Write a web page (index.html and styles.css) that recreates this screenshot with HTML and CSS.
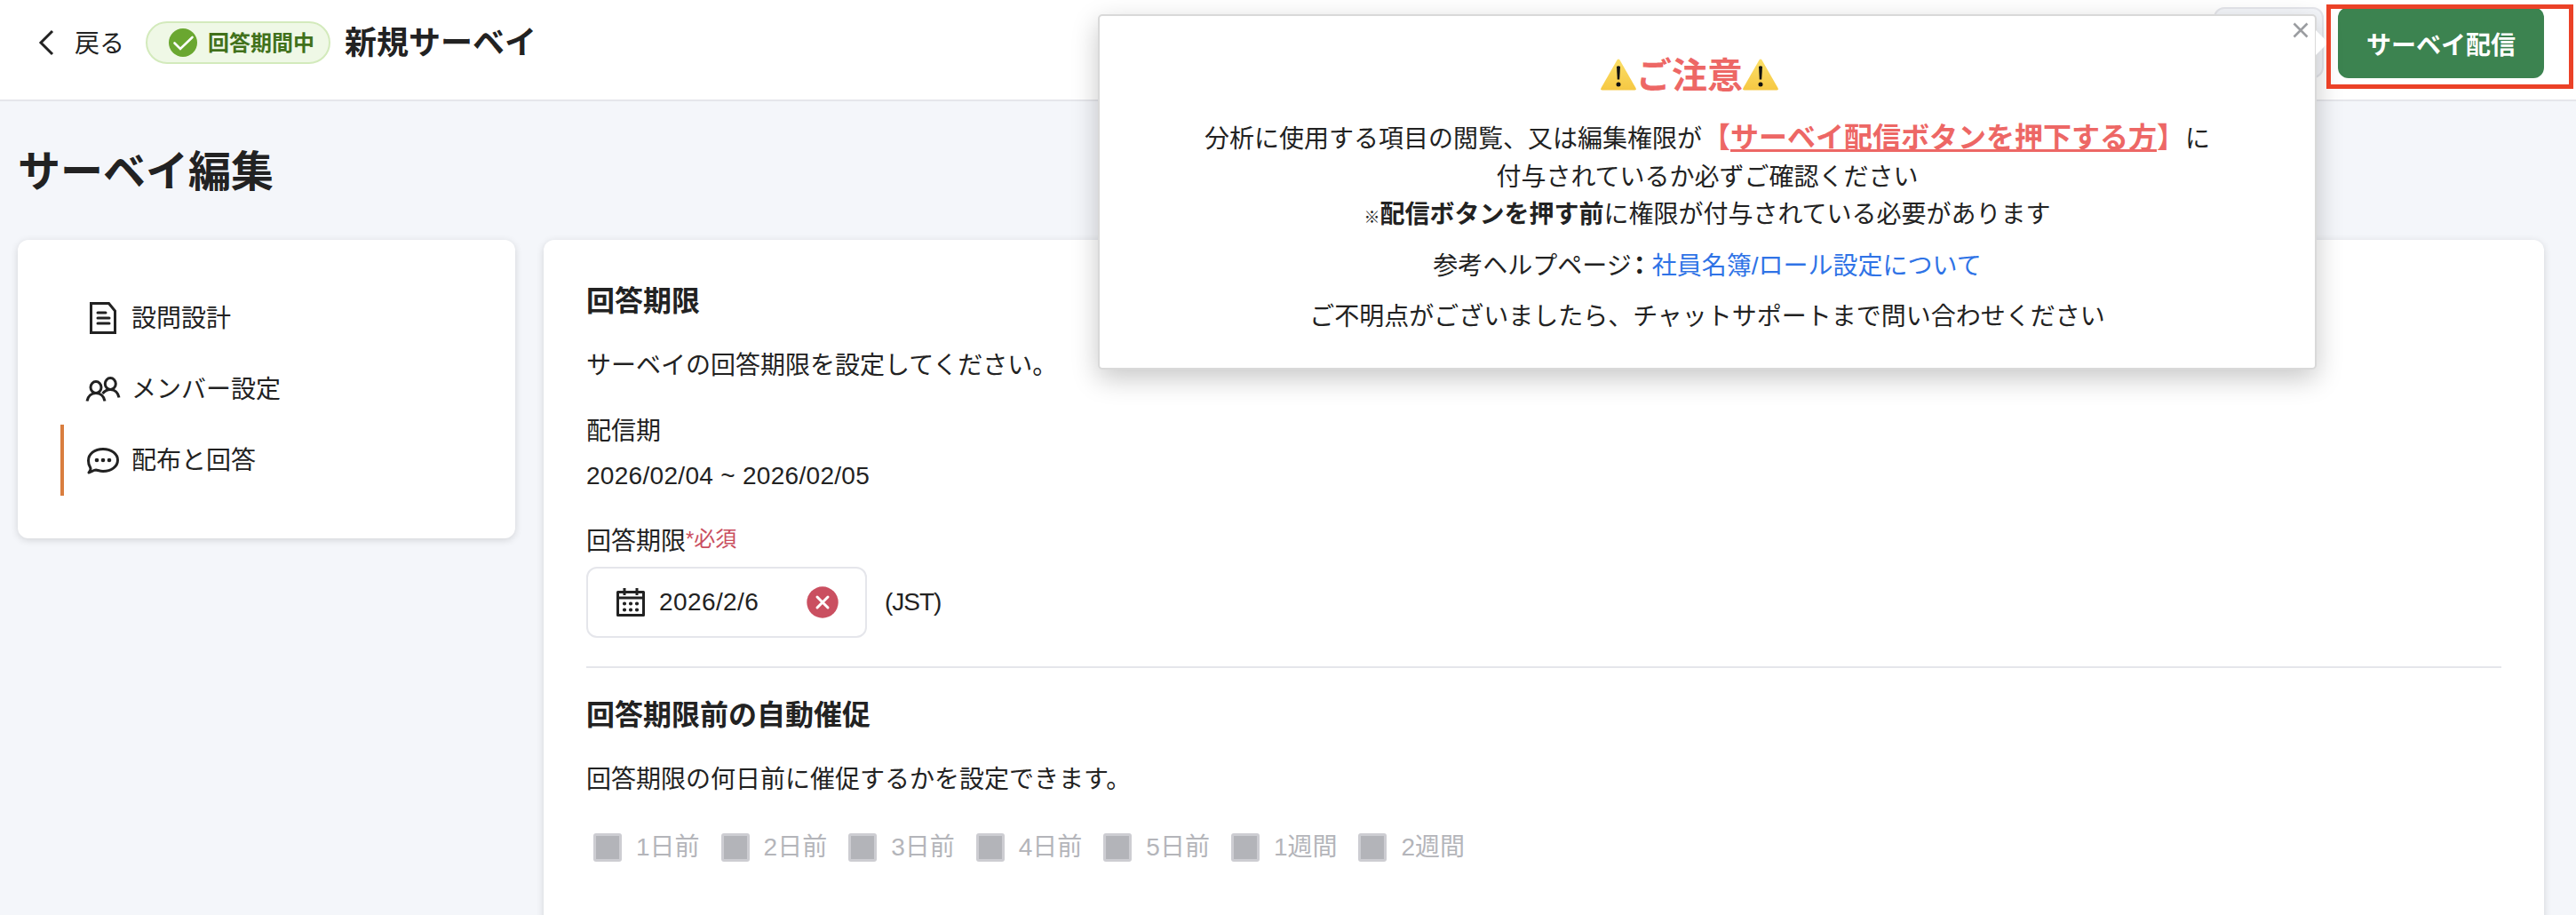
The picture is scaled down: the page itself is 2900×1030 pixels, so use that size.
FILE: index.html
```html
<!DOCTYPE html>
<html lang="ja">
<head>
  <meta charset="UTF-8">
  <meta name="viewport" content="width=device-width, initial-scale=1.0">
  <title>サーベイ編集</title>
  <link rel="stylesheet" href="styles.css">
</head>
<body>
  <!-- Header -->
  <header class="header">
    <a class="back" href="#">
      <svg class="back-icon" width="20" height="32" viewBox="0 0 20 32"><path d="M17 3 4 16l13 13" fill="none" stroke="currentColor" stroke-width="3"/></svg>
      <span>戻る</span>
    </a>
    <div class="badge">
      <svg width="32" height="32" viewBox="0 0 32 32">
        <circle cx="16" cy="16" r="16" fill="#6aa730"/>
        <path d="M6.500 16.500 13 23 26.500 10" fill="none" stroke="#fff" stroke-width="2.600" stroke-linecap="round"/>
      </svg>
      <span>回答期間中</span>
    </div>
    <h1 class="survey-name">新規サーベイ</h1>
    <div class="header-actions">
      <button class="sub-button" type="button" aria-label="メニュー"></button>
      <div class="send-area">
        <button class="send-button" type="button">サーベイ配信</button>
        <div class="highlight"></div>
      </div>
    </div>
  </header>

  <h2 class="page-title">サーベイ編集</h2>

  <div class="layout">
    <!-- Side menu -->
    <nav class="card side-menu">
      <a class="menu-item" href="#">
        <svg class="menu-icon" width="40" height="40" viewBox="0 0 40 40" fill="none" stroke="currentColor" stroke-width="3">
          <path d="M6.500 3.500H26.500L33.500 12V36.500H6.500Z"/>
          <path d="M14 14H23M14 20H27M14 26H27" stroke-linecap="round"/>
        </svg>
        <span>設問設計</span>
      </a>
      <a class="menu-item" href="#">
        <svg class="menu-icon" width="40" height="40" viewBox="0 0 40 40" fill="none" stroke="currentColor" stroke-width="3">
          <ellipse cx="12" cy="18" rx="6" ry="6.500"/>
          <ellipse cx="28.300" cy="14" rx="6" ry="6.500"/>
          <path d="M2 33.500C3 28 7 24.500 12 24.500S21 28 22 33.500M19.500 25C21.500 22.500 24.500 20.500 28.300 20.500 33.500 20.500 37 24.500 38 29.500"/>
        </svg>
        <span>メンバー設定</span>
      </a>
      <a class="menu-item active" href="#">
        <svg class="menu-icon" width="40" height="40" viewBox="0 0 40 40">
          <path d="M5.500 28C3.800 25.700 3.500 22.500 3.500 20.500 3.500 13 10.500 7.500 20 7.500S36.500 13 36.500 20 29.500 32.500 20 32.500C17 32.500 14.500 31.500 12 31 9 31 7 33.500 4 34 5.500 32 7 30.500 5.500 28Z" fill="none" stroke="currentColor" stroke-width="3" stroke-linejoin="round"/>
          <circle cx="13" cy="20" r="2.300" fill="currentColor"/>
          <circle cx="20" cy="20" r="2.300" fill="currentColor"/>
          <circle cx="27" cy="20" r="2.300" fill="currentColor"/>
        </svg>
        <span>配布と回答</span>
      </a>
    </nav>

    <!-- Main content -->
    <main class="card content">
      <section class="deadline">
        <h3>回答期限</h3>
        <p class="description">サーベイの回答期限を設定してください。</p>
        <p class="term-label">配信期</p>
        <p class="term">2026/02/04 ~ 2026/02/05</p>
        <p class="field-label">回答期限<span class="required">*必須</span></p>
        <div class="date-row">
          <div class="date-input">
            <svg width="32" height="34" viewBox="0 0 32 34">
              <path d="M1.500 5.500H30.500V31.500H1.500Z" fill="none" stroke="currentColor" stroke-width="3" stroke-linejoin="round"/>
              <path d="M0 12H32M9 1V9M23 1V9" stroke="currentColor" stroke-width="3"/>
              <path d="M9 18.500h.01M16 18.500h.01M23 18.500h.01M9 25.500h.01M16 25.500h.01M23 25.500h.01" stroke="currentColor" stroke-width="4.200" stroke-linecap="round"/>
            </svg>
            <span class="date">2026/2/6</span>
            <svg class="clear" width="36" height="36" viewBox="0 0 36 36">
              <circle cx="18" cy="18" r="17.700" fill="#ca4f60"/>
              <path d="M12 12 24 24M24 12 12 24" stroke="#fff" stroke-width="3" stroke-linecap="round"/>
            </svg>
          </div>
          <span class="timezone">(JST)</span>
        </div>
      </section>

      <section class="reminder">
        <h3>回答期限前の自動催促</h3>
        <p class="description">回答期限の何日前に催促するかを設定できます。</p>
        <div class="checks">
          <label class="check"><span class="box"></span>1日前</label>
          <label class="check"><span class="box"></span>2日前</label>
          <label class="check"><span class="box"></span>3日前</label>
          <label class="check"><span class="box"></span>4日前</label>
          <label class="check"><span class="box"></span>5日前</label>
          <label class="check"><span class="box"></span>1週間</label>
          <label class="check"><span class="box"></span>2週間</label>
        </div>
      </section>
    </main>
  </div>

  <!-- Notice popup -->
  <div class="popup">
    <svg class="popup-close" width="18" height="18" viewBox="0 0 18 18"><path d="M1.500 1.500 16.500 16.500M16.500 1.500 1.500 16.500" stroke="#9b9da1" stroke-width="2.600"/></svg>
    <h2 class="popup-title">
      <svg class="warning" width="40" height="36" viewBox="0 0 40 36">
        <defs>
          <linearGradient id="warn" x1="0" y1="0" x2="0" y2="1">
            <stop offset="0" stop-color="#fbdf68"/>
            <stop offset="1" stop-color="#f6c843"/>
          </linearGradient>
        </defs>
        <path d="M18.500 1.500Q20-.5 21.500 1.500L39.500 33Q40.500 35.500 38 35.500H2Q-.5 35.500.5 33Z" fill="url(#warn)"/>
        <path d="M18 9Q20 7.500 22 9L21.200 23.500H18.800Z" fill="#111"/>
        <circle cx="20" cy="29" r="2.500" fill="#111"/>
      </svg><span>ご注意</span><svg class="warning" width="40" height="36" viewBox="0 0 40 36">
        <path d="M18.500 1.500Q20-.5 21.500 1.500L39.500 33Q40.500 35.500 38 35.500H2Q-.5 35.500.5 33Z" fill="url(#warn)"/>
        <path d="M18 9Q20 7.500 22 9L21.200 23.500H18.800Z" fill="#111"/>
        <circle cx="20" cy="29" r="2.500" fill="#111"/>
      </svg>
    </h2>
    <p>分析に使用する項目の閲覧、又は編集権限が<strong class="alert">【<u>サーベイ配信ボタンを押下する方</u>】</strong>に<br>
      付与されているか必ずご確認ください<br>
      <span class="mark">※</span><strong>配信ボタンを押す前</strong>に権限が付与されている必要があります</p>
    <p>参考ヘルプページ<strong class="colon">：</strong><a href="#">社員名簿/ロール設定について</a></p>
    <p>ご不明点がございましたら、チャットサポートまで問い合わせください</p>
  </div>
</body>
</html>
```
FILE: styles.css
```css
* {
  box-sizing: border-box;
}
body {
  margin: 0;
  height: 1030px;
  background-color: #f4f6fa;
  color: #222;
  font-family: 'Liberation Sans', 'Noto Sans CJK JP', sans-serif;
  font-size: 28px;
  line-height: 42px;
  overflow: hidden;
}
h1, h2, h3, p {
  margin: 0;
}
a {
  color: inherit;
  text-decoration: none;
}
button {
  padding: 0;
  font-family: inherit;
}
svg {
  display: block;
  flex: none;
}
.card {
  background-color: #fff;
  border-radius: 12px;
  box-shadow: 0 2px 8px rgba(0, 0, 0, 0.14);
}

/* Header */
.header {
  display: flex;
  align-items: center;
  height: 114px;
  padding: 8px 36px 24px 42px;
  background-color: #fff;
  border-bottom: 2px solid #e5e6eb;
}
.back {
  display: flex;
  align-items: center;
  gap: 22px;
}
.back span {
  padding-top: 4px;
}
.badge {
  display: flex;
  align-items: center;
  gap: 12px;
  width: 208px;
  height: 48px;
  margin: 0 16px 0 24px;
  padding-left: 24px;
  border: 2px solid #d3eabc;
  border-radius: 24px;
  background-color: #eff8e6;
  color: #41711b;
  font-size: 24px;
  font-weight: bold;
}
.badge span {
  padding-top: 2px;
}
.survey-name {
  padding-top: 2px;
  font-size: 36px;
}
.header-actions {
  display: flex;
  gap: 16px;
  margin-left: auto;
}
.sub-button {
  width: 124px;
  height: 80px;
  border: 2px solid #e5e6eb;
  border-radius: 12px;
  background-color: #f4f6fa;
}
.send-area {
  position: relative;
}
.send-button {
  display: block;
  width: 232px;
  height: 80px;
  padding-top: 2px;
  border: none;
  border-radius: 12px;
  background-color: #3c8350;
  color: #fff;
  font-size: 28px;
  font-weight: bold;
}
/* Red frame laid over the send button */
.highlight {
  position: absolute;
  top: -3px;
  left: -13px;
  z-index: 3;
  width: 278px;
  height: 95px;
  border: 5px solid #eb4127;
}

.page-title {
  padding: 56px 20px 52px;
  font-size: 48px;
  line-height: 48px;
}
.layout {
  display: flex;
  align-items: flex-start;
  gap: 32px;
  padding: 0 36px 0 20px;
}

/* Side menu */
.side-menu {
  width: 560px;
  padding: 48px;
}
.menu-item {
  display: flex;
  align-items: center;
  gap: 12px;
  height: 80px;
  padding-left: 24px;
  border-left: 4px solid transparent;
}
.menu-item span {
  padding-top: 2px;
}
.menu-item.active {
  border-left-color: #d97e3f;
}

/* Main content */
.content {
  flex: 1;
  height: 800px;
  padding: 49px 48px 48px;
}
.deadline {
  height: 433px;
  border-bottom: 2px solid #e5e6eb;
}
h3 {
  font-size: 32px;
  line-height: 40px;
}
.description {
  margin-top: 32px;
}
.term-label {
  margin-top: 32px;
}
.term {
  margin-top: 8px;
  letter-spacing: 0.3px;
}
.field-label {
  margin-top: 32px;
}
.required {
  position: relative;
  top: -4px;
  color: #ca4f60;
  font-size: 24px;
  line-height: 1;
}
.date-row {
  display: flex;
  align-items: center;
  gap: 20px;
  margin-top: 7px;
}
.date-input {
  display: flex;
  align-items: center;
  width: 316px;
  height: 80px;
  padding: 0 30px 0 32px;
  border: 2px solid #e5e6eb;
  border-radius: 12px;
}
.date {
  margin-left: 16px;
  letter-spacing: 0.4px;
}
.timezone {
  letter-spacing: -1px;
}
.clear {
  margin-left: auto;
}
.reminder {
  padding-top: 33px;
}
.checks {
  display: flex;
  gap: 24px;
  margin-top: 34px;
  padding-left: 8px;
  color: #b4b5ba;
}
.check {
  display: flex;
  align-items: center;
  gap: 16px;
}
.box {
  width: 32px;
  height: 32px;
  border: 3px solid #cdcdd2;
  border-radius: 3px;
  background-color: #b3b4b9;
}

/* Notice popup */
.popup {
  position: absolute;
  top: 16px;
  left: 1236px;
  z-index: 2;
  width: 1372px;
  height: 400px;
  padding-top: 46px;
  border: 2px solid #d9d9d9;
  border-radius: 5px;
  background-color: #fff;
  box-shadow: 0 10px 30px rgba(0, 0, 0, 0.22);
  text-align: center;
}
.popup::after {
  content: "";
  position: absolute;
  top: 16px;
  right: -15px;
  border: 14px solid transparent;
  border-right-width: 0;
  border-left-color: #fff;
}
.popup-close {
  position: absolute;
  top: 7px;
  right: 7px;
}
.popup-title {
  display: flex;
  justify-content: center;
  align-items: center;
  height: 40px;
  margin-bottom: 32px;
  padding-right: 40px;
  color: #ed6765;
  font-size: 40px;
}
.popup-title span {
  padding-top: 2px;
}
.popup p {
  margin-bottom: 15px;
  line-height: 42.5px;
}
.popup .alert {
  color: #ed6765;
  font-size: 32px;
  line-height: 1;
}
.popup u {
  text-decoration-thickness: 3px;
  text-decoration-skip-ink: none;
  text-underline-offset: 2px;
}
.mark {
  font-size: 18px;
  font-weight: bold;
  line-height: 1;
}
.colon {
  margin-left: -5px;
}
.popup p a {
  color: #2f73e6;
}
```
